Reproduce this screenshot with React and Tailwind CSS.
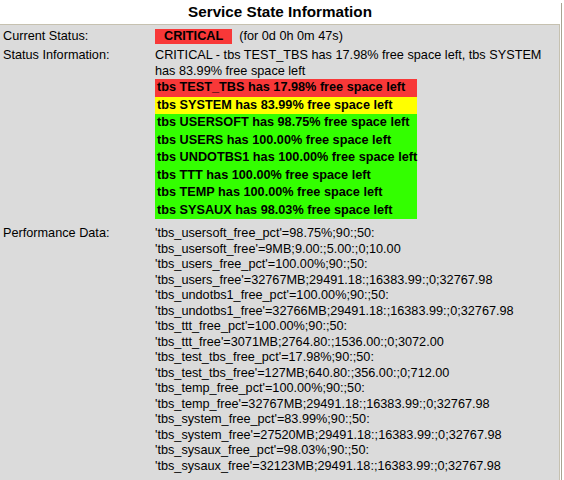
import React from "react";

const rows = [
  { t: "tbs TEST_TBS has 17.98% free space left", c: "bg-[#f83838]" },
  { t: "tbs SYSTEM has 83.99% free space left", c: "bg-[#ffff00]" },
  { t: "tbs USERSOFT has 98.75% free space left", c: "bg-[#33ff00]" },
  { t: "tbs USERS has 100.00% free space left", c: "bg-[#33ff00]" },
  { t: "tbs UNDOTBS1 has 100.00% free space left", c: "bg-[#33ff00]" },
  { t: "tbs TTT has 100.00% free space left", c: "bg-[#33ff00]" },
  { t: "tbs TEMP has 100.00% free space left", c: "bg-[#33ff00]" },
  { t: "tbs SYSAUX has 98.03% free space left", c: "bg-[#33ff00]" },
];

const perf = [
  "'tbs_usersoft_free_pct'=98.75%;90:;50:",
  "'tbs_usersoft_free'=9MB;9.00:;5.00:;0;10.00",
  "'tbs_users_free_pct'=100.00%;90:;50:",
  "'tbs_users_free'=32767MB;29491.18:;16383.99:;0;32767.98",
  "'tbs_undotbs1_free_pct'=100.00%;90:;50:",
  "'tbs_undotbs1_free'=32766MB;29491.18:;16383.99:;0;32767.98",
  "'tbs_ttt_free_pct'=100.00%;90:;50:",
  "'tbs_ttt_free'=3071MB;2764.80:;1536.00:;0;3072.00",
  "'tbs_test_tbs_free_pct'=17.98%;90:;50:",
  "'tbs_test_tbs_free'=127MB;640.80:;356.00:;0;712.00",
  "'tbs_temp_free_pct'=100.00%;90:;50:",
  "'tbs_temp_free'=32767MB;29491.18:;16383.99:;0;32767.98",
  "'tbs_system_free_pct'=83.99%;90:;50:",
  "'tbs_system_free'=27520MB;29491.18:;16383.99:;0;32767.98",
  "'tbs_sysaux_free_pct'=98.03%;90:;50:",
  "'tbs_sysaux_free'=32123MB;29491.18:;16383.99:;0;32767.98",
];

export default function App() {
  return (
    <div className="w-[564px] h-[480px] overflow-hidden bg-white text-black font-['Liberation_Sans',Arial,sans-serif] flex">
      <div className="w-[560px] shrink-0 flex flex-col">
        <div className="h-[24px] shrink-0 flex items-center justify-center text-[15.25px] font-bold leading-none">
          Service State Information
        </div>
        <div className="flex-1 min-h-0 bg-[#dbdbdb] border-t border-r border-[#c6c1b0] pl-[3px] text-[12.7px]">
          <div className="grid grid-cols-[152px_1fr]">
            <div className="h-[21px] mt-[1px] flex items-center">Current Status:</div>
            <div className="h-[21px] mt-[1px] flex items-center gap-[7px]">
              <span className="h-[15px] px-[9px] flex items-center bg-[#f83838] font-bold">CRITICAL</span>
              <span>(for 0d 0h 0m 47s)</span>
            </div>

            <div className="pt-[1.25px] leading-[15.5px]">Status Information:</div>
            <div className="pt-[1.25px]">
              <div className="leading-[15.5px] w-[400px]">
                CRITICAL - tbs TEST_TBS has 17.98% free space left, tbs SYSTEM has 83.99% free space left
              </div>
              <div className="w-[262px]">
                {rows.map((r, i) => (
                  <div key={i} className={`h-[17.5px] flex items-center pl-[2px] font-bold whitespace-nowrap ${r.c}`}>
                    {r.t}
                  </div>
                ))}
              </div>
            </div>

            <div className="mt-[7px] leading-[15.5px]">Performance Data:</div>
            <div className="mt-[7px] leading-[15.5px]">
              {perf.map((p, i) => (
                <div key={i} className="whitespace-nowrap">{p}</div>
              ))}
            </div>
          </div>
        </div>
      </div>
      <div className="w-[1px] shrink-0" />
      <div className="w-[1px] shrink-0 mt-[3px] bg-[#a8a492]" />
    </div>
  );
}
